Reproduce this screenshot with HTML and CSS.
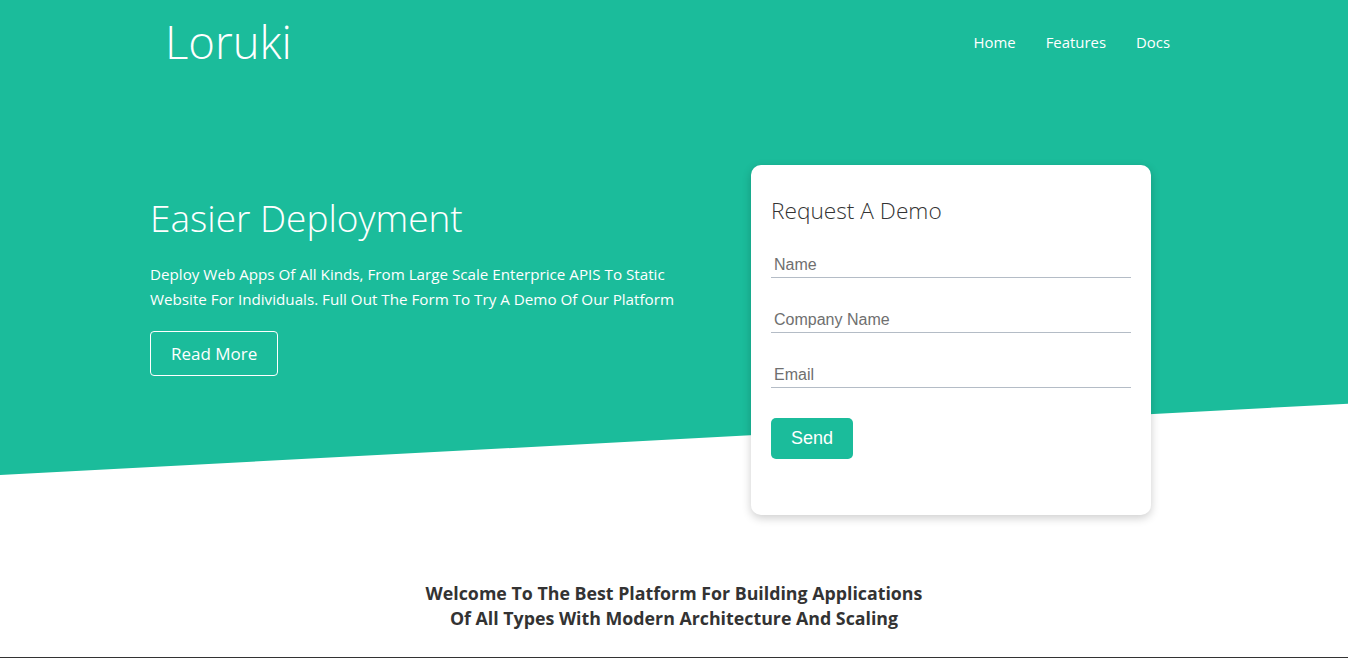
FILE: index.html
```html
<!DOCTYPE html>
<html lang="en">
<head>
<meta charset="UTF-8">
<title>Loruki</title>
<link rel="stylesheet" href="styles.css">
</head>
<body>
<header class="showcase">
  <nav class="navbar">
    <h1 class="logo">Loruki</h1>
    <ul class="nav-links">
      <li><a href="#">Home</a></li>
      <li><a href="#">Features</a></li>
      <li><a href="#">Docs</a></li>
    </ul>
  </nav>
  <div class="showcase-grid">
    <div class="showcase-text">
      <h2 class="hero-title">Easier Deployment</h2>
      <p class="hero-lead">Deploy Web Apps Of All Kinds, From Large Scale Enterprice APIS To Static Website For Individuals. Full Out The Form To Try A Demo Of Our Platform</p>
      <a href="#" class="btn-outline">Read More</a>
    </div>
    <div class="card">
      <h3 class="card-title">Request A Demo</h3>
      <form class="demo-form">
        <input type="text" class="field" placeholder="Name">
        <input type="text" class="field" placeholder="Company Name">
        <input type="email" class="field" placeholder="Email">
        <button type="button" class="btn-send">Send</button>
      </form>
    </div>
  </div>
</header>
<section class="welcome">
  <p class="welcome-text">Welcome To The Best Platform For Building Applications<br>Of All Types With Modern Architecture And Scaling</p>
</section>
<section class="stats"></section>
</body>
</html>
```
FILE: styles.css
```css
* { box-sizing: border-box; margin: 0; padding: 0; }
body {
  font-family: "Open Sans", "Noto Sans", sans-serif;
  color: #333;
  background: #fff;
  overflow: hidden;
}
.showcase {
  position: relative;
  height: 475px;
  color: #fff;
}
.showcase::before {
  content: "";
  position: absolute;
  inset: 0;
  background: #1bbc9b;
  clip-path: polygon(0 0, 100% 0, 100% 85%, 0 100%);
  z-index: -1;
}
.navbar {
  display: flex;
  align-items: center;
  justify-content: space-between;
  height: 83px;
  width: 1005px;
  margin-left: calc(50% - 509px);
}
.logo {
  font-weight: 300;
  font-size: 45.5px;
  line-height: 1;
}
.nav-links {
  display: flex;
  list-style: none;
  gap: 30px;
}
.nav-links a {
  color: #fff;
  text-decoration: none;
  font-size: 14.9px;
}
.showcase-grid {
  display: grid;
  grid-template-columns: 1fr 400px;
  gap: 40px;
  width: 1001px;
  margin-left: calc(50% - 524px);
  margin-top: 1px;
}
.showcase-text {
  padding-top: 112px;
}
.hero-title {
  font-weight: 300;
  font-size: 37px;
  line-height: 1.2;
  margin-bottom: 22px;
}
.hero-lead {
  font-size: 15.2px;
  line-height: 25px;
  margin-bottom: 19px;
  max-width: 560px;
}
.btn-outline {
  display: inline-block;
  color: #fff;
  text-decoration: none;
  border: 1px solid #fff;
  border-radius: 4px;
  padding: 9px 20px;
  font-size: 17px;
  line-height: 25px;
}
.card {
  margin-top: 81px;
  background: #fff;
  color: #333;
  border-radius: 10px;
  box-shadow: 0 3px 10px rgba(0, 0, 0, 0.2);
  padding: 30px 20px 56px;
  height: 350px;
}
.card-title {
  font-weight: 300;
  font-size: 22.7px;
  line-height: 32px;
  margin-bottom: 22px;
}
.demo-form {
  display: flex;
  flex-direction: column;
  align-items: flex-start;
}
.field {
  width: 100%;
  border: 0;
  border-bottom: 1px solid #b4bcc6;
  padding: 6px 3px 2px;
  font-family: "Liberation Sans", Arial, sans-serif;
  font-size: 16px;
  line-height: 20px;
  margin-bottom: 26px;
  outline: none;
  background: transparent;
}
.field::placeholder { color: #6f6f6f; }
.btn-send {
  margin-top: 4px;
  background: #1bbc9b;
  color: #fff;
  border: 0;
  border-radius: 5px;
  width: 82px;
  height: 41px;
  font-family: "Liberation Sans", Arial, sans-serif;
  font-size: 18px;
}
.welcome {
  padding-top: 106px;
  height: 182px;
  text-align: center;
}
.welcome-text {
  font-weight: 700;
  font-size: 17.8px;
  line-height: 25px;
}
.stats {
  height: 200px;
  background: #333;
}
```
